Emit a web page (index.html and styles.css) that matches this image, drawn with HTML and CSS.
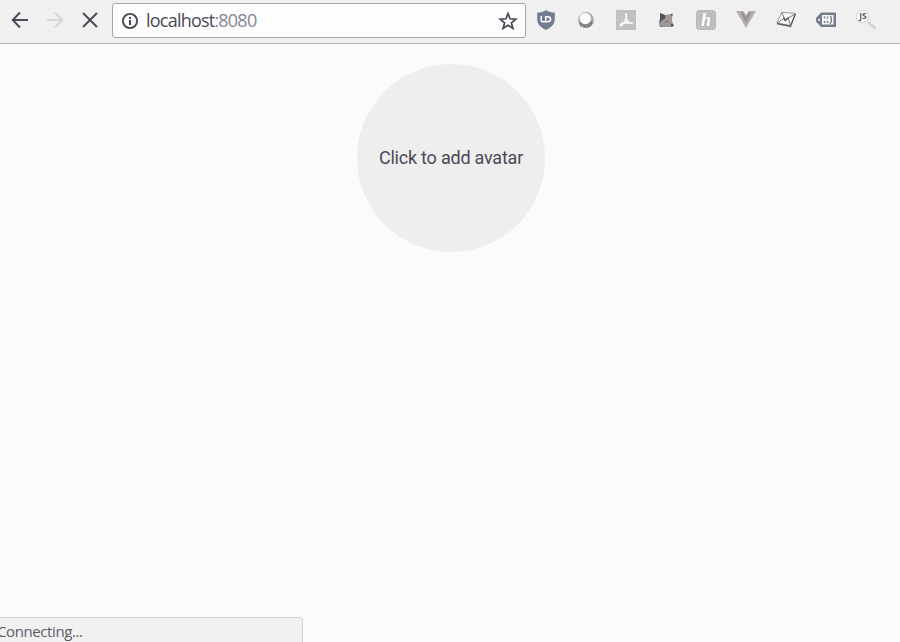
FILE: index.html
```html
<!DOCTYPE html>
<html lang="en">
<head>
<meta charset="utf-8">
<title>localhost:8080</title>
<link rel="stylesheet" href="styles.css">
</head>
<body>
<header class="toolbar">
  <nav class="nav">
    <svg class="icon" viewBox="0 0 20 20"><path class="line" d="M18 10H3M10 2.5L2.7 10L10 17.5"/></svg>
    <svg class="icon disabled" viewBox="0 0 20 20"><path class="line" d="M2 10H17M10 2.5L17.3 10L10 17.5"/></svg>
    <svg class="icon" viewBox="0 0 20 20"><path class="line" d="M3 3L17 17M17 3L3 17"/></svg>
  </nav>
  <div class="omnibox">
    <svg class="info" viewBox="0 0 18 18"><circle class="line" cx="9" cy="9" r="7.1"/><path class="info-mark" d="M8 8h2v5H8zM8 5h2v2H8z"/></svg>
    <span class="url">localhost<span class="port">:8080</span></span>
    <svg class="icon star" viewBox="0 0 20 20"><path d="M10 2.6L12.1 7.8L17.8 8.2L13.4 11.8L14.9 17.4L10 14.3L5.1 17.4L6.600 11.800L2.200 8.200L7.900 7.800Z"/></svg>
  </div>
  <div class="extensions">
    <svg class="icon" viewBox="0 0 20 20"><path fill="#747c91" d="M10 0C7.500 2 4 2.500 1.200 2.500V9C1.200 14.500 5 17.500 10 20C15 17.500 18.800 14.500 18.800 9V2.500C16 2.500 12.500 2 10 0Z"/><path fill="none" stroke="#fff" stroke-width="1.500" d="M5.200 6V10.500Q5.200 11.700 6.500 11.700H9.200M9.700 6V11.700H11.500Q14.600 11.700 14.600 9.200Q14.600 6.700 11.500 6.700H9.700"/></svg>
    <svg class="icon" viewBox="0 0 20 20"><circle cx="10" cy="10" r="7.900" fill="#aaa8a7"/><path d="M3 13A7.500 7.500 0 0 0 17 13L14 10H5Z" fill="#8b8584"/><circle cx="9.300" cy="8.500" r="5.700" fill="#fcfcfc"/><path d="M4 15.500l1 .7M8 16.500h1M12 15.500h1M15 13h1" stroke="#5e5b64"/></svg>
    <svg class="icon" viewBox="0 0 20 20"><path fill="#bfc0c0" d="M0 0H20V20H0Z"/><path fill="#f5f5f5" fill-rule="evenodd" d="M9 3H11V8L13 11.500L17 12.500V14.500L12 13.800L8 14L5 17L3 16L4 13.500L8 11.500L9 8ZM9.500 11.500L11 12L10 10.500Z"/><path stroke="#ddd" stroke-dasharray="1 2" d="M2 3.500H7M2 6.500H7M2 9.500H7"/></svg>
    <svg class="icon" viewBox="0 0 20 20"><path fill="#a09894" d="M4 9L7 5L14 4.500L16.500 4L16 10L17 16L14 17H4L3 15Z"/><path fill="#504e5d" d="M4 3L8 4.500L9.500 6.500L8.500 9L6 10L3 14L4 9ZM13.500 4.500L16.500 3.500V6L15 5ZM16 13L18 15.500L16 17L14.500 15.800Z"/><path stroke="#504e5d" d="M10 11.500h1.500M5 16.500h1"/></svg>
    <svg class="icon" viewBox="0 0 20 20"><rect width="20" height="20" rx="3.500" fill="#bbbaba"/><path stroke="#d5d5d5" stroke-dasharray="1 2" d="M3 2.500H18M3 17.500H18M2.500 4V17M17.500 4V17"/><text class="honey" x="10" y="16" text-anchor="middle">h</text></svg>
    <svg class="icon" viewBox="0 0 20 20"><path fill="#b5afad" d="M0 1H7.500L10 5L12.500 1H20L10 18Z"/><path fill="#969090" d="M4.500 2.500H7L10 7L13 2.500H15.500L10 13Z"/></svg>
    <svg class="icon" viewBox="0 0 20 20"><path fill="#f8f8f8" stroke="#96959a" d="M6 2.300L19.500 3.500L14.500 15.500L.8 13Z"/><path fill="none" stroke="#5b5a61" stroke-width="1.300" d="M1 13.500L14.500 16.500L19.300 4"/><path fill="none" stroke="#77767c" d="M5.800 2.500L9 10L19 4M1.500 13L7.500 8.500M14.500 15.500L12.500 9"/><path fill="none" stroke="#4a4a50" stroke-width="1.400" d="M7.500 8L9.200 10.500L12.800 7.500"/></svg>
    <svg class="icon" viewBox="0 0 20 20"><path fill="#747c91" fill-rule="evenodd" d="M0 8L5 2.500H20V17H5L0 11.500ZM2 9V10.800H4V9Z"/><path fill="#f6f6f6" d="M6 5H17.500V14.500H6Z"/><path stroke="#747c91" stroke-width="1.400" fill="none" d="M8.500 6.500V8.500M8.500 11V13M11.500 6.500V8.500M11.500 11V13M14 5.700Q15.500 7 15.500 9.700Q15.500 12.500 14 13.800"/></svg>
    <svg class="icon" viewBox="0 0 20 20"><path stroke="#bfc2c2" stroke-width="2.600" d="M12 12.500L19.300 18.500"/><path stroke="#f6f6f6" d="M12.500 13L19 18.500"/><circle cx="6.500" cy="6.500" r="6.200" fill="#fdfdfd" stroke="#cdd0d0"/><text class="js" x="7" y="9" text-anchor="middle">JS</text></svg>
  </div>
</header>
<main class="page">
  <div class="avatar">Click to add avatar</div>
</main>
<div class="status"><span class="status-text">Connecting...</span></div>
</body>
</html>
```

FILE: styles.css
```css
* { box-sizing: border-box; }
body {
  margin: 0;
  height: 642px;
  overflow: hidden;
  display: flex;
  flex-direction: column;
  background: #fbfbfb;
  color: #4a4956;
}
.toolbar {
  height: 44px;
  display: flex;
  align-items: flex-start;
  background: #f0f0f0;
  border-bottom: 1px solid #b5b7b5;
}
.nav {
  display: flex;
  gap: 15px;
  width: 112px;
  padding: 10px 0 0 10px;
}
.icon { width: 20px; height: 20px; flex: none; display: block; }
.line { fill: none; stroke: #4a4956; stroke-width: 1.9; }
.disabled .line { stroke: #d3d9d9; }
.omnibox {
  width: 414px;
  height: 35px;
  margin-top: 3px;
  display: flex;
  align-items: center;
  padding: 0 7px 0 8px;
  background: #fdfdfd;
  border: 1px solid #aaa39e;
  border-radius: 3px;
}
.info { width: 18px; height: 18px; margin-right: 7px; }
.info-mark { fill: #4a4956; }
.url {
  flex: 1;
  font: 18px/24px "Open Sans", "Noto Sans", sans-serif;
  letter-spacing: -0.78px;
  position: relative;
  top: -1px;
}
.port { color: #848793; }
.star path { fill: none; stroke: #4a4956; stroke-width: 1.7; }
.extensions {
  display: flex;
  gap: 20px;
  padding: 10px 0 0 10px;
}
.honey { fill: #fff; font: italic bold 18px "Liberation Serif", serif; }
.js { fill: #5c596a; font: bold 8.5px "Open Sans", sans-serif; }
.page {
  flex: 1;
  display: flex;
  justify-content: center;
  align-items: flex-start;
  padding: 20px 0 0 2px;
}
.avatar {
  width: 188px;
  height: 188px;
  border-radius: 50%;
  display: flex;
  align-items: center;
  justify-content: center;
  background: #eee;
  font: 18px/24px Roboto, sans-serif;
  letter-spacing: -0.22px;
  white-space: nowrap;
}
.status {
  width: 303px;
  height: 25px;
  overflow: hidden;
  background: #f1f1f1;
  border: 1px solid #ced2d1;
  border-width: 1px 1px 0 0;
  border-radius: 0 4px 0 0;
  font: 15px/27px "Open Sans", "Noto Sans", sans-serif;
  letter-spacing: -0.4px;
  color: #5b5c68;
}
.status-text { margin-left: -3px; }
```
